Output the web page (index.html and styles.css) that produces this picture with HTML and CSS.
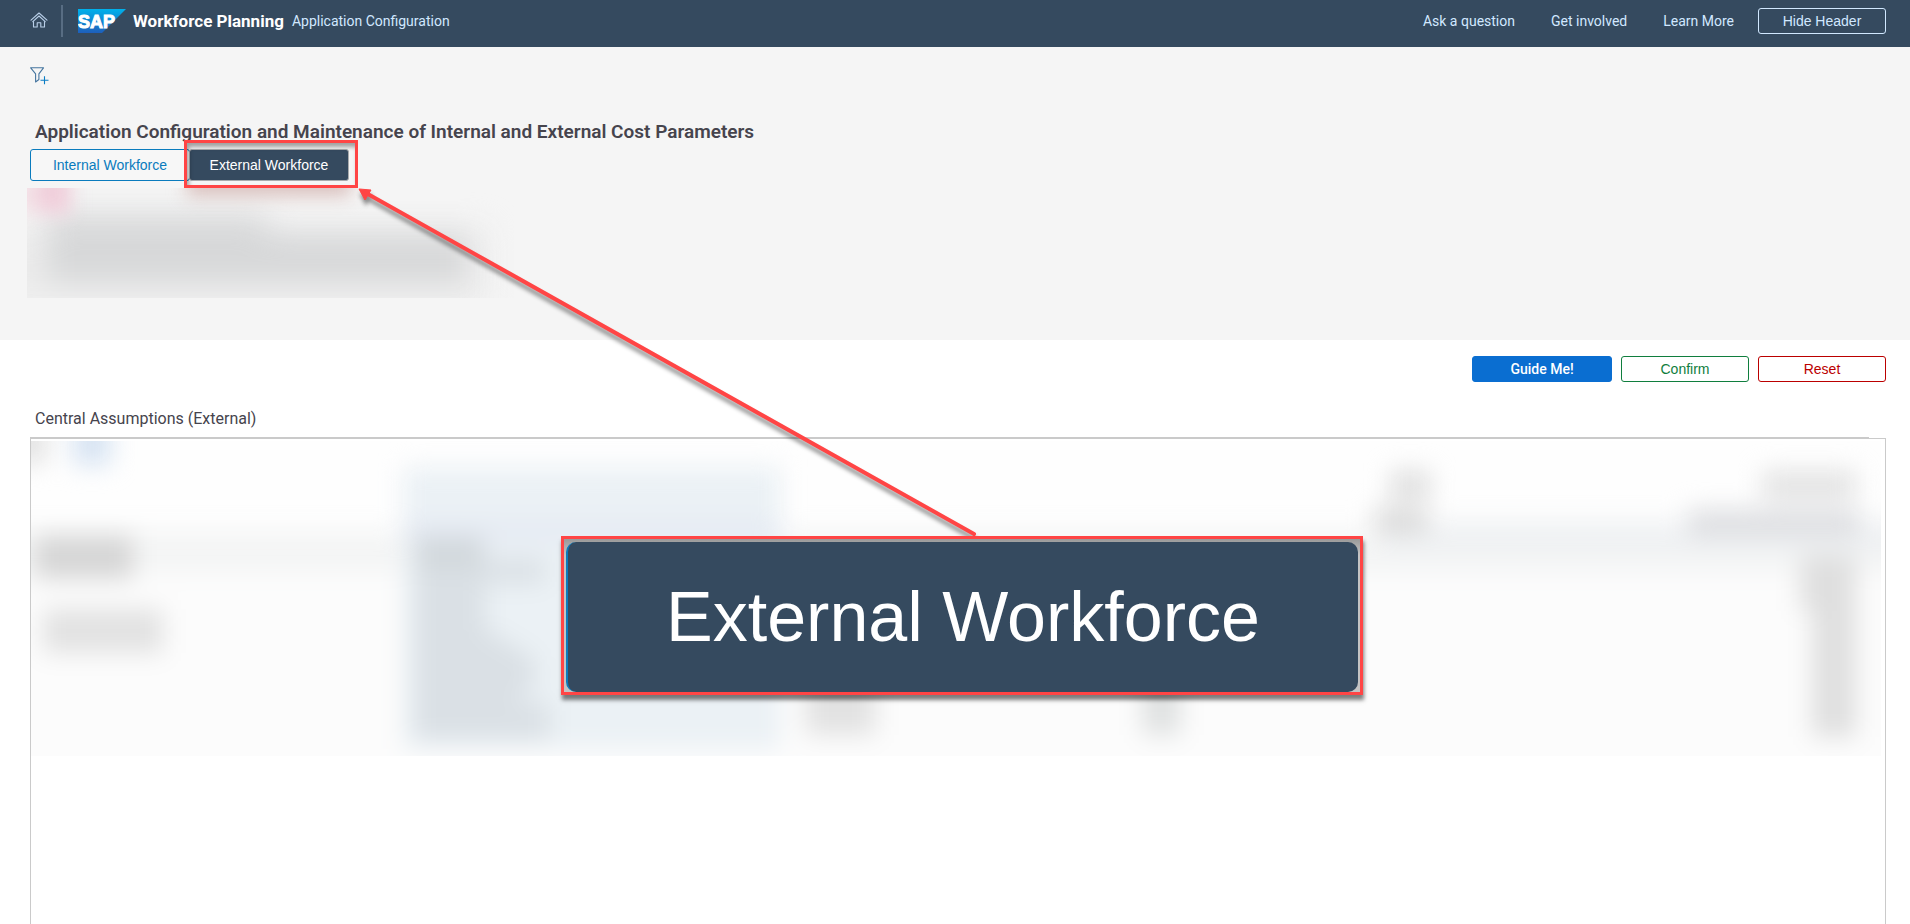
FILE: index.html
```html
<!DOCTYPE html>
<html lang="en">
<head>
<meta charset="utf-8">
<meta name="viewport" content="width=device-width, initial-scale=1">
<title>Workforce Planning – Application Configuration</title>
<link rel="stylesheet" href="styles.css">
</head>
<body>
<div class="page">
  <header class="shell">
    <a class="home" href="#" aria-label="Home">
      <svg width="18" height="18" viewBox="0 0 18 18" fill="none" stroke="currentColor" stroke-width="1.1" stroke-linejoin="round" stroke-linecap="round"><path d="M1 8.200 9 1l8 7.200"/><path d="M2.800 9.600 9 4l6.200 5.600"/><path d="M3.500 9.500V15h3.700v-4.300h3.600V15h3.700V9.500"/></svg>
    </a>
    <span class="divider"></span>
    <svg class="logo" width="48" height="24" viewBox="0 0 48 24" role="img" aria-label="SAP">
      <defs><linearGradient id="sap" x1="0" y1="0" x2="0" y2="1"><stop offset="0" stop-color="#00b1eb"/><stop offset="1" stop-color="#1e5fbb"/></linearGradient></defs>
      <path d="M0 0h48L24 24H0z" fill="url(#sap)"/>
      <text class="logo-text" x="0" y="19">SAP</text>
    </svg>
    <span class="product">Workforce Planning</span>
    <span class="app">Application Configuration</span>
    <nav class="links">
      <a href="#">Ask a question</a>
      <a href="#">Get involved</a>
      <a href="#">Learn More</a>
    </nav>
    <button class="btn btn-hide" type="button">Hide Header</button>
  </header>

  <section class="intro">
    <button class="filter" type="button" aria-label="Add filter">
      <svg width="19" height="18" viewBox="0 0 19 18" fill="none" stroke-width="1.1"><path d="M.7.800h12.800L8.900 6.900v5.600L5.600 15V6.900z" stroke="#45759f" stroke-linejoin="round"/><path d="M14.500 9.200v8M10.500 13.200h8" stroke="#0a7cc4"/></svg>
    </button>
    <h1 class="title">Application Configuration and Maintenance of Internal and External Cost Parameters</h1>
    <div class="tabs">
      <button class="tab" type="button">Internal Workforce</button>
      <button class="tab tab-on" type="button" aria-pressed="true">External Workforce</button>
    </div>
    <svg class="haze-intro" viewBox="0 0 490 110" color-interpolation-filters="sRGB" aria-hidden="true">
      <defs>
        <filter id="b1" filterUnits="userSpaceOnUse" x="-60" y="-60" width="620" height="240"><feGaussianBlur stdDeviation="15"/></filter>
        <filter id="b0" filterUnits="userSpaceOnUse" x="-60" y="-60" width="620" height="240"><feGaussianBlur stdDeviation="9"/></filter>
      </defs>
      <g filter="url(#b1)"><rect x="-30" y="40" width="490" height="80" fill="#ececec"/><path d="M20 26H240V44H440V94H20z" fill="#d7d8d9"/></g>
      <g filter="url(#b0)"><rect x="10" y="-20" width="34" height="46" fill="#f0cfdb"/><rect x="-20" y="-10" width="30" height="34" fill="#f3e2e7"/><rect x="160" y="-18" width="164" height="26" fill="#d9c0bd"/></g>
    </svg>
  </section>

  <main class="content">
    <div class="actions">
      <button class="btn btn-guide" type="button">Guide Me!</button>
      <button class="btn btn-confirm" type="button">Confirm</button>
      <button class="btn btn-reset" type="button">Reset</button>
    </div>
    <h2 class="subtitle">Central Assumptions (External)</h2>
    <div class="rule"></div>
    <div class="grid">
      <svg class="haze-grid" viewBox="0 0 1851 315" preserveAspectRatio="none" color-interpolation-filters="sRGB" aria-hidden="true">
        <defs><filter id="b2" filterUnits="userSpaceOnUse" x="-60" y="-60" width="1980" height="440"><feGaussianBlur stdDeviation="12"/></filter></defs>
        <rect width="1851" height="315" fill="#fefefe"/>
        <g filter="url(#b2)">
          <rect x="-40" y="95" width="1930" height="280" fill="#fcfcfc"/>
          <rect x="-40" y="90" width="1930" height="42" fill="#f4f5f5"/>
          <rect x="1355" y="80" width="540" height="32" fill="#eff1f3"/>
          <rect x="372" y="26" width="378" height="282" fill="#ebf1f5"/>
          <rect x="372" y="80" width="378" height="20" fill="#e5eaf3"/>
          <rect x="-20" y="-20" width="36" height="42" fill="#e2e2e2"/>
          <rect x="42" y="-20" width="38" height="44" fill="#d6e3f2"/>
          <rect x="4" y="94" width="98" height="44" fill="#d6d6d6"/>
          <rect x="12" y="168" width="120" height="44" fill="#e2e2e2"/>
          <path d="M384 96h70v22h60v24h-60v46l50 30v24l-20 20h35v36h-135z" fill="#dae0e5"/>
          <rect x="386" y="96" width="65" height="32" fill="#d2d8dc"/>
          <rect x="775" y="236" width="70" height="58" fill="#e2e2e2"/>
          <rect x="1112" y="236" width="38" height="58" fill="#dfe1e1"/>
          <rect x="1360" y="30" width="40" height="28" fill="#dedede"/>
          <rect x="1344" y="66" width="54" height="27" fill="#dcdcdc"/>
          <rect x="1732" y="30" width="94" height="28" fill="#e2e2e2"/>
          <rect x="1658" y="68" width="172" height="28" fill="#dedfe2"/>
          <path d="M1770 114h56v182h-44V170h-12z" fill="#dfdfdf"/>
        </g>
      </svg>
    </div>
  </main>

  <div class="mark" aria-hidden="true"></div>
  <svg class="arrow" width="640" height="370" viewBox="0 0 640 370" aria-hidden="true">
    <path d="M15 12 623 353" stroke="#ff4545" stroke-width="4" stroke-linecap="round"/>
    <path d="M8 8 20 9l-6 10z" fill="#ff4545" stroke="#ff4545"/>
  </svg>
  <div class="callout"><div class="callout-face">External Workforce</div></div>
</div>
</body>
</html>
```

FILE: styles.css
```css
* { box-sizing: border-box; }

body {
  margin: 0;
  background: #fff;
  color: #46444d;
  font-family: Roboto, "Liberation Sans", sans-serif;
  font-size: 14px;
}

button { font: inherit; cursor: pointer; }
a { color: inherit; text-decoration: none; }

.page {
  position: relative;
  display: flex;
  flex-direction: column;
  min-height: 100vh;
  overflow: hidden;
}

.shell {
  display: flex;
  align-items: center;
  height: 47px;
  padding: 0 24px 5px 30px;
  background: #354a5f;
  color: #d1e8ff;
}
.home { display: flex; width: 31px; color: #b9cfe8; }
.divider { width: 2px; height: 32px; margin-right: 15px; background: #586d83; }
.logo-text {
  font: bold 18px "Liberation Sans", sans-serif;
  fill: #fff;
  stroke: #fff;
  stroke-width: 1px;
}
.product { margin: 0 8px 0 7px; color: #fff; font-size: 17px; font-weight: 700; }
.links { display: flex; gap: 36px; margin-left: auto; }

.btn {
  width: 128px;
  height: 26px;
  padding: 0;
  border: 1px solid;
  border-radius: 3px;
  background: #fff;
  font-family: "Liberation Sans", sans-serif;
}
.btn-hide { margin-left: 24px; background: transparent; color: #d1e8ff; }
.btn-guide { width: 140px; background: #0a6ed1; border-color: #0a6ed1; color: #fff; font-family: Roboto, sans-serif; font-weight: 500; }
.btn-confirm { color: #107e3e; }
.btn-reset { color: #bb0000; }

.intro {
  height: 293px;
  padding: 20px 24px 0 30px;
  background: #f5f5f5;
}
.filter { display: flex; padding: 0; border: 0; background: none; }
.title {
  margin: 35px 0 5px 5px;
  font-size: 19px;
  line-height: 24px;
  font-weight: 600;
}
.tabs { display: flex; }
.tab {
  width: 160px;
  height: 32px;
  border: 1px solid #0a7bbd;
  border-radius: 3px;
  background: #f7f7f7;
  color: #0a7bbd;
  font-family: "Liberation Sans", sans-serif;
}
.tab-on { margin-left: -1px; background: #354a5f; border-color: #a9abad; color: #fff; }
.haze-intro { display: block; width: 490px; height: 110px; margin: 7px 0 0 -3px; }

.content {
  flex: 1;
  display: flex;
  flex-direction: column;
  padding: 16px 24px 0 30px;
}
.actions { display: flex; justify-content: flex-end; gap: 9px; }
.subtitle {
  margin: 26px 0 7px 5px;
  font-size: 16px;
  line-height: 22px;
  font-weight: 400;
}
.rule { height: 1px; margin-right: 17px; background: #cacaca; }
.grid { flex: 1; border: 1px solid #cacaca; border-bottom: 0; padding: 2px 4px 0 0; }
.haze-grid { display: block; width: 100%; height: 315px; }

/* Annotation layer drawn over the page */
.mark {
  position: absolute;
  left: 184px;
  top: 140px;
  width: 174px;
  height: 48px;
  border: 3px solid #ff4545;
  box-shadow: inset 2px 4px 4px rgba(0, 0, 0, .35);
}
.arrow { position: absolute; left: 351px; top: 181px; filter: drop-shadow(1px 5px 2px rgba(0, 0, 0, .45)); }
.callout {
  position: absolute;
  left: 561px;
  top: 536px;
  width: 802px;
  height: 159px;
  padding: 3px 2px 0;
  border: 3px solid #ff4545;
  background: linear-gradient(#999, #c4c4c4 16px);
  box-shadow: 1px 5px 4px rgba(0, 0, 0, .5);
}
.callout-face {
  height: 100%;
  border-left: 2px solid #0a7bbd;
  border-radius: 10px;
  background: #354a5f;
  color: #fff;
  font: 70px/150px "Liberation Sans", sans-serif;
  text-align: center;
}
```
